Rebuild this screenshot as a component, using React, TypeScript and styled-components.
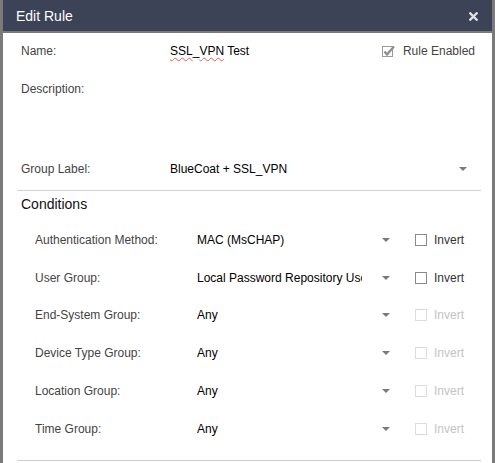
import styled, { createGlobalStyle } from 'styled-components';

const GlobalStyle = createGlobalStyle`
  html, body {
    margin: 0;
    padding: 0;
    background: #fff;
  }
  body {
    font-family: "Liberation Sans", Arial, sans-serif;
    font-size: 12px;
    overflow: hidden;
  }
`;

const Dialog = styled.div`
  width: 495px;
  height: 463px;
  box-sizing: border-box;
  border-left: 3px solid #7a7a7a;
  border-right: 3px solid #7a7a7a;
  background: #fff;
  overflow: hidden;
`;

const TitleBar = styled.div`
  height: 31px;
  background: #3d4356;
  border-bottom: 2px solid #7a7a7a;
  display: flex;
  align-items: center;
  justify-content: space-between;
  padding: 0 14px 0 13px;
  color: #fff;
  font-size: 14px;
`;

const CloseButton = styled.button`
  border: none;
  background: none;
  padding: 0;
  display: flex;
  cursor: pointer;
  margin-top: 1px;
`;

const Body = styled.div`
  padding: 2px 0 0 18px;
`;

const FieldRow = styled.div<{ $height: number; $top?: boolean }>`
  display: flex;
  align-items: ${(p) => (p.$top ? 'flex-start' : 'center')};
  height: ${(p) => p.$height}px;
  padding-top: ${(p) => (p.$top ? '15px' : '0')};
  box-sizing: border-box;
  line-height: 14px;
`;

const Label = styled.div<{ $width: number }>`
  width: ${(p) => p.$width}px;
  color: #444;
  flex-shrink: 0;
`;

const Value = styled.div`
  color: #000;
  flex: 1;
`;

const Misspelled = styled.span`
  text-decoration: underline wavy #e25c5c;
  text-decoration-thickness: 1px;
  text-underline-offset: 2px;
`;

const EnabledBox = styled.label`
  display: flex;
  align-items: center;
  gap: 6px;
  color: #444;
  margin-right: 17px;
`;

const Select = styled.div<{ $width: number }>`
  display: flex;
  align-items: center;
  width: ${(p) => p.$width}px;
  color: #000;
`;

const SelectText = styled.div<{ $width?: number }>`
  flex: ${(p) => (p.$width ? `0 0 ${p.$width}px` : '1')};
  white-space: nowrap;
  overflow: hidden;
`;

const Arrow = styled.span`
  width: 0;
  height: 0;
  margin-left: auto;
  border-left: 4px solid transparent;
  border-right: 4px solid transparent;
  border-top: 4px solid #7a7a7a;
  flex-shrink: 0;
`;

const Divider = styled.div`
  height: 1px;
  background: #cfcfcf;
  margin: 2px 11px 0 -4px;
`;

const SectionTitle = styled.div`
  font-size: 14px;
  color: #111;
  height: 25px;
  line-height: 27px;
`;

const Conditions = styled.div`
  padding: 5px 0 0 14px;
`;

const ConditionRow = styled.div`
  display: grid;
  grid-template-columns: 162px 193px 1fr;
  align-items: center;
  height: 37.8px;
  line-height: 14px;
`;

const CheckLabel = styled.label<{ $disabled?: boolean }>`
  display: flex;
  align-items: center;
  gap: 7px;
  margin-left: 25px;
  color: ${(p) => (p.$disabled ? '#c4c4c4' : '#333')};
`;

const Box = styled.span<{ $disabled?: boolean }>`
  width: 10px;
  height: 10px;
  border: 1px solid ${(p) => (p.$disabled ? '#dcdcdc' : '#8a8a8a')};
  background: #fff;
  display: inline-block;
`;

const BottomDivider = styled(Divider)`
  margin-top: 12px;
`;

const conditions = [
  { label: 'Authentication Method:', value: 'MAC (MsCHAP)', disabled: false },
  { label: 'User Group:', value: 'Local Password Repository Users', disabled: false },
  { label: 'End-System Group:', value: 'Any', disabled: true },
  { label: 'Device Type Group:', value: 'Any', disabled: true },
  { label: 'Location Group:', value: 'Any', disabled: true },
  { label: 'Time Group:', value: 'Any', disabled: true },
];

const CheckedIcon = () => (
  <svg width="15" height="13" viewBox="0 0 15 13">
    <rect x="0.5" y="1.5" width="10" height="10" fill="#fff" stroke="#9a9a9a" />
    <path d="M2.5 6.5 L5 9.5 L12 1.5" fill="none" stroke="#8c8c8c" strokeWidth="2.2" />
  </svg>
);

const App = () => {
  return (
    <>
      <GlobalStyle />
      <Dialog>
        <TitleBar>
          <span>Edit Rule</span>
          <CloseButton aria-label="Close">
            <svg width="9" height="9" viewBox="0 0 9 9">
              <path d="M1.3 1.3 L7.7 7.7 M7.7 1.3 L1.3 7.7" stroke="#dfe1e6" strokeWidth="2.3" strokeLinecap="square" />
            </svg>
          </CloseButton>
        </TitleBar>
        <Body>
          <FieldRow $height={32}>
            <Label $width={149}>Name:</Label>
            <Value>
              <Misspelled>SSL</Misspelled>_<Misspelled>VPN</Misspelled> Test
            </Value>
            <EnabledBox>
              <CheckedIcon />
              Rule Enabled
            </EnabledBox>
          </FieldRow>
          <FieldRow $height={83} $top>
            <Label $width={149}>Description:</Label>
          </FieldRow>
          <FieldRow $height={38}>
            <Label $width={149}>Group Label:</Label>
            <Select $width={297}>
              <SelectText>BlueCoat + SSL_VPN</SelectText>
              <Arrow />
            </Select>
          </FieldRow>
          <Divider />
          <SectionTitle>Conditions</SectionTitle>
          <Conditions>
            {conditions.map((c) => (
              <ConditionRow key={c.label}>
                <Label $width={162}>{c.label}</Label>
                <Select $width={193}>
                  <SelectText $width={165}>{c.value}</SelectText>
                  <Arrow />
                </Select>
                <CheckLabel $disabled={c.disabled}>
                  <Box $disabled={c.disabled} />
                  Invert
                </CheckLabel>
              </ConditionRow>
            ))}
          </Conditions>
          <BottomDivider />
        </Body>
      </Dialog>
    </>
  );
};

export default App;
